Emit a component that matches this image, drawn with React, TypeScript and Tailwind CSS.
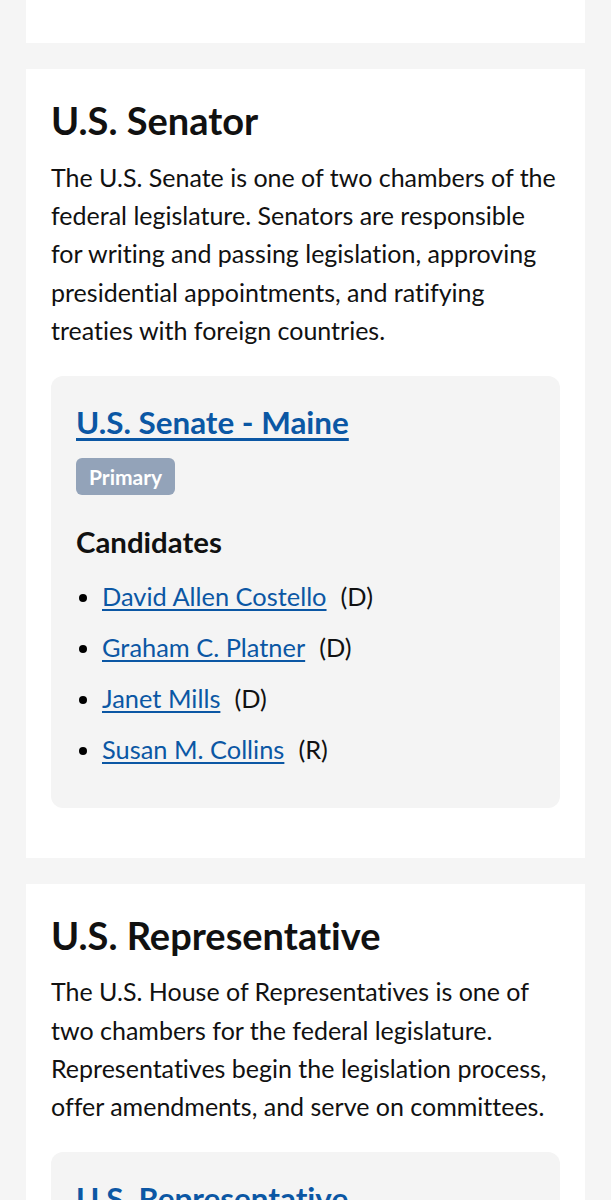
const senators = [
  { name: 'David Allen Costello', party: 'D' },
  { name: 'Graham C. Platner', party: 'D' },
  { name: 'Janet Mills', party: 'D' },
  { name: 'Susan M. Collins', party: 'R' },
];

export default function App() {
  return (
    <div className="min-h-[1200px] bg-[#f5f5f5] px-[26px] font-['Lato',sans-serif] text-[#111] [font-variant-ligatures:none]">
      {/* tail end of the previous office card */}
      <div className="h-[43px] bg-white" />

      {/* Senator */}
      <section className="mt-[26px] bg-white px-[25px] pb-[50px] pt-[29px]">
        <h2 className="text-[38px] font-bold leading-[1.2]">U.S. Senator</h2>
        <p className="mt-[14px] text-[25px] leading-[38.4px]">
          The U.S. Senate is one of two chambers of the federal legislature. Senators are responsible for writing and
          passing legislation, approving presidential appointments, and ratifying treaties with foreign countries.
        </p>

        <div className="mt-[26px] rounded-xl bg-[#f4f4f4] px-[25px] pb-[40px] pt-[28px]">
          <a href="#" className="text-[31.4px] font-bold leading-[1.2] text-[#0b57a4] underline underline-offset-4">
            U.S. Senate - Maine
          </a>
          <div className="mt-[17px]">
            <span className="inline-block rounded-md bg-[#93a3b9] px-[13px] py-[5px] text-[21px] font-bold leading-[27px] text-white">
              Primary
            </span>
          </div>
          <h3 className="mt-[29px] text-[29.4px] font-bold leading-[1.2]">Candidates</h3>
          <ul className="mt-[17px] flex list-disc flex-col gap-[13px] pl-[26px] text-[25.4px] leading-[38px] marker:text-black">
            {senators.map((c) => (
              <li key={c.name}>
                <a href="#" className="text-[#0b57a4] underline underline-offset-[3px]">
                  {c.name}
                </a>
                <span className="ml-[14px]">({c.party})</span>
              </li>
            ))}
          </ul>
        </div>
      </section>

      {/* Representative */}
      <section className="mt-[26px] bg-white px-[25px] pb-[50px] pt-[29px]">
        <h2 className="text-[38px] font-bold leading-[1.2]">U.S. Representative</h2>
        <p className="mt-[14px] text-[25px] leading-[38.4px]">
          The U.S. House of Representatives is one of two chambers for the federal legislature. Representatives begin
          the legislation process, offer amendments, and serve on committees.
        </p>

        <div className="mt-[26px] rounded-xl bg-[#f4f4f4] px-[25px] pb-[40px] pt-[28px]">
          <a href="#" className="text-[31.4px] font-bold leading-[1.2] text-[#0b57a4] underline underline-offset-4">
            U.S. Representative
          </a>
        </div>
      </section>
    </div>
  );
}
